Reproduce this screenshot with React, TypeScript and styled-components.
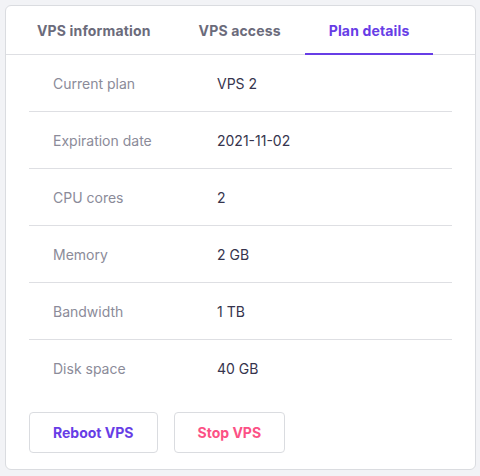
import { useState } from "react";
import styled, { createGlobalStyle } from "styled-components";

const Color = {
  Page: "#f2f3f6",
  Border: "#dadce0",
  Divider: "#dedfe3",
  Primary: "#673de6",
  Danger: "#fc5185",
  Text: "#36344d",
  Muted: "#8b8b99",
  TabText: "#6b6b7b",
};

const GlobalStyle = createGlobalStyle`
  html, body {
    margin: 0;
    padding: 0;
    background: ${Color.Page};
  }
  body {
    font-family: Inter, "Noto Sans", "Liberation Sans", sans-serif;
    font-size: 14px;
    color: ${Color.Text};
  }
`;

const tabs = ["VPS information", "VPS access", "Plan details"];

const planRows = [
  { label: "Current plan", value: "VPS 2" },
  { label: "Expiration date", value: "2021-11-02" },
  { label: "CPU cores", value: "2" },
  { label: "Memory", value: "2 GB" },
  { label: "Bandwidth", value: "1 TB" },
  { label: "Disk space", value: "40 GB" },
];

const App = () => {
  const [active, setActive] = useState(2);

  return (
    <>
      <GlobalStyle />
      <Page>
        <Card>
          <TabBar>
            {tabs.map((tab, i) => (
              <Tab key={tab} $active={i === active} onClick={() => setActive(i)}>
                {tab}
              </Tab>
            ))}
          </TabBar>
          <Body>
            <DetailList>
              {planRows.map((row) => (
                <DetailRow key={row.label}>
                  <Label>{row.label}</Label>
                  <Value>{row.value}</Value>
                </DetailRow>
              ))}
            </DetailList>
            <Actions>
              <ActionButton $tone={Color.Primary}>Reboot VPS</ActionButton>
              <ActionButton $tone={Color.Danger}>Stop VPS</ActionButton>
            </Actions>
          </Body>
        </Card>
      </Page>
    </>
  );
};

const Page = styled.div`
  padding: 5px 4px 6px 5px;
`;

const Card = styled.div`
  background: #fff;
  border: 1px solid ${Color.Border};
  border-radius: 6px;
  overflow: hidden;
`;

const TabBar = styled.div`
  display: flex;
  height: 48px;
  padding-left: 7px;
  border-bottom: 1px solid ${Color.Divider};
`;

const Tab = styled.button<{ $active: boolean }>`
  font: inherit;
  font-weight: 700;
  font-size: 14px;
  letter-spacing: 0.15px;
  background: none;
  border: none;
  cursor: pointer;
  padding: 2px 24px 0;
  margin-bottom: -1px;
  color: ${(p) => (p.$active ? Color.Primary : Color.TabText)};
  border-bottom: 2px solid ${(p) => (p.$active ? Color.Primary : "transparent")};
`;

const Body = styled.div`
  padding: 0 23px 16px;
`;

const DetailList = styled.div`
  display: flex;
  flex-direction: column;
`;

const DetailRow = styled.div`
  display: grid;
  grid-template-columns: 188px 1fr;
  align-items: center;
  height: 56px;
  border-bottom: 1px solid ${Color.Divider};

  &:last-child {
    border-bottom: none;
  }
`;

const Label = styled.div`
  padding-left: 24px;
  color: ${Color.Muted};
`;

const Value = styled.div`
  color: ${Color.Text};
`;

const Actions = styled.div`
  display: flex;
  gap: 16px;
  margin-top: 16px;
`;

const ActionButton = styled.button<{ $tone: string }>`
  font: inherit;
  font-weight: 700;
  font-size: 14px;
  height: 41px;
  padding: 0 23px;
  background: #fff;
  border: 1px solid ${Color.Border};
  border-radius: 4px;
  color: ${(p) => p.$tone};
  cursor: pointer;
`;

export default App;
